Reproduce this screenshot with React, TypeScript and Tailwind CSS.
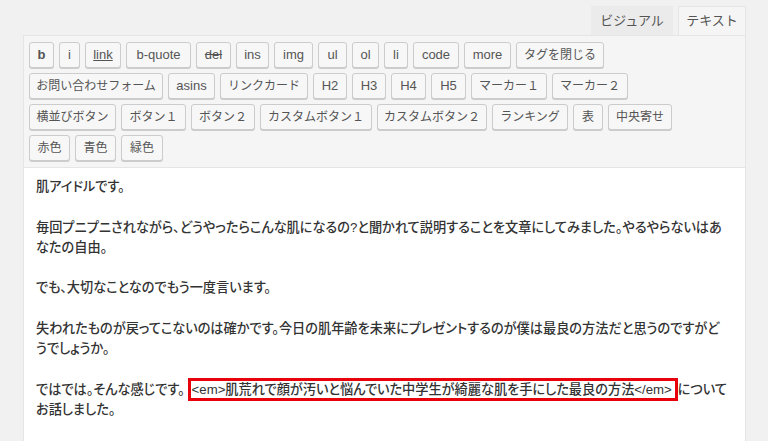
// WordPress text editor (quicktags) mock
const font = "font-['Liberation_Sans','Noto_Sans_CJK_JP',sans-serif]";

interface QButton {
    label: string;
    w: string;
    deco?: string;
    jp?: boolean;
}

const rows: QButton[][] = [
    [
        { label: 'b', w: 'w-[25px]', deco: 'font-bold' },
        { label: 'i', w: 'w-[21px]' },
        { label: 'link', w: 'w-[36px]', deco: 'underline' },
        { label: 'b-quote', w: 'w-[65px]' },
        { label: 'del', w: 'w-[35px]', deco: 'line-through' },
        { label: 'ins', w: 'w-[33px]' },
        { label: 'img', w: 'w-[39px]' },
        { label: 'ul', w: 'w-[29px]' },
        { label: 'ol', w: 'w-[27px]' },
        { label: 'li', w: 'w-[24px]' },
        { label: 'code', w: 'w-[46px]' },
        { label: 'more', w: 'w-[47px]' },
        { label: 'タグを閉じる', w: 'w-[88px]', jp: true },
    ],
    [
        { label: 'お問い合わせフォーム', w: 'w-[134px]', jp: true },
        { label: 'asins', w: 'w-[47px]' },
        { label: 'リンクカード', w: 'w-[88px]', jp: true },
        { label: 'H2', w: 'w-[34px]' },
        { label: 'H3', w: 'w-[34px]' },
        { label: 'H4', w: 'w-[35px]' },
        { label: 'H5', w: 'w-[35px]' },
        { label: 'マーカー１', w: 'w-[76px]', jp: true },
        { label: 'マーカー２', w: 'w-[76px]', jp: true },
    ],
    [
        { label: '横並びボタン', w: 'w-[87px]', jp: true },
        { label: 'ボタン１', w: 'w-[65px]', jp: true },
        { label: 'ボタン２', w: 'w-[64px]', jp: true },
        { label: 'カスタムボタン１', w: 'w-[112px]', jp: true },
        { label: 'カスタムボタン２', w: 'w-[110px]', jp: true },
        { label: 'ランキング', w: 'w-[76px]', jp: true },
        { label: '表', w: 'w-[30px]', jp: true },
        { label: '中央寄せ', w: 'w-[64px]', jp: true },
    ],
    [
        { label: '赤色', w: 'w-[41px]', jp: true },
        { label: '青色', w: 'w-[41px]', jp: true },
        { label: '緑色', w: 'w-[42px]', jp: true },
    ],
];

export default function App() {
    return (
        <div className={`w-full h-[441px] overflow-hidden bg-[#f1f1f1] pl-[23px] pr-[22px] ${font}`}>
            {/* Tabs */}
            <div className="h-[35px] flex justify-end items-end gap-[5px]">
                <div className="w-[82px] h-[29px] flex items-center justify-center bg-[#ebebeb] text-[13px] text-[#555]">
                    ビジュアル
                </div>
                <div className="w-[68px] h-[29px] flex items-center justify-center bg-[#f5f5f5] border border-b-0 border-[#e5e5e5] text-[13px] text-[#555]">
                    テキスト
                </div>
            </div>

            {/* Quicktags toolbar */}
            <div className="bg-[#f5f5f5] border border-[#e5e5e5] px-[5px] pt-[6px] pb-[6px] flex flex-col gap-[5px]">
                {rows.map((row, i) => (
                    <div key={i} className="flex gap-[5px]">
                        {row.map(btn => (
                            <div
                                key={btn.label}
                                className={`${btn.w} h-[26px] shrink-0 flex items-center justify-center rounded-[3px] bg-[#f7f7f7] border border-[#cccccc] shadow-[0_1px_0_#cccccc] text-[#555] whitespace-nowrap ${btn.jp ? 'text-[12px]' : 'text-[13px]'} ${btn.deco ?? ''}`}
                            >
                                {btn.label}
                            </div>
                        ))}
                    </div>
                ))}
            </div>

            {/* Text area */}
            <div className="bg-white border-x border-[#e5e5e5] h-[300px] pl-[12px] pt-[9px] text-[13.2px] leading-[20.3px] text-[#333] font-medium [font-feature-settings:'palt'] whitespace-nowrap">
                <div>肌アイドルです。</div>
                <div>&nbsp;</div>
                <div>毎回プニプニされながら、どうやったらこんな肌になるの?と聞かれて説明することを文章にしてみました。やるやらないはあ</div>
                <div>なたの自由。</div>
                <div>&nbsp;</div>
                <div>でも、大切なことなのでもう一度言います。</div>
                <div>&nbsp;</div>
                <div>失われたものが戻ってこないのは確かです。今日の肌年齢を未来にプレゼントするのが僕は最良の方法だと思うのですがど</div>
                <div>うでしょうか。</div>
                <div>&nbsp;</div>
                <div>
                    ではでは。そんな感じです。
                    <span className="ml-[3px] border-[3px] border-[#e8000b] py-[1px] pl-[1px] pr-[3px]">&lt;em&gt;肌荒れで顔が汚いと悩んでいた中学生が綺麗な肌を手にした最良の方法&lt;/em&gt;</span>
                    について
                </div>
                <div>お話しました。</div>
            </div>
        </div>
    );
}
